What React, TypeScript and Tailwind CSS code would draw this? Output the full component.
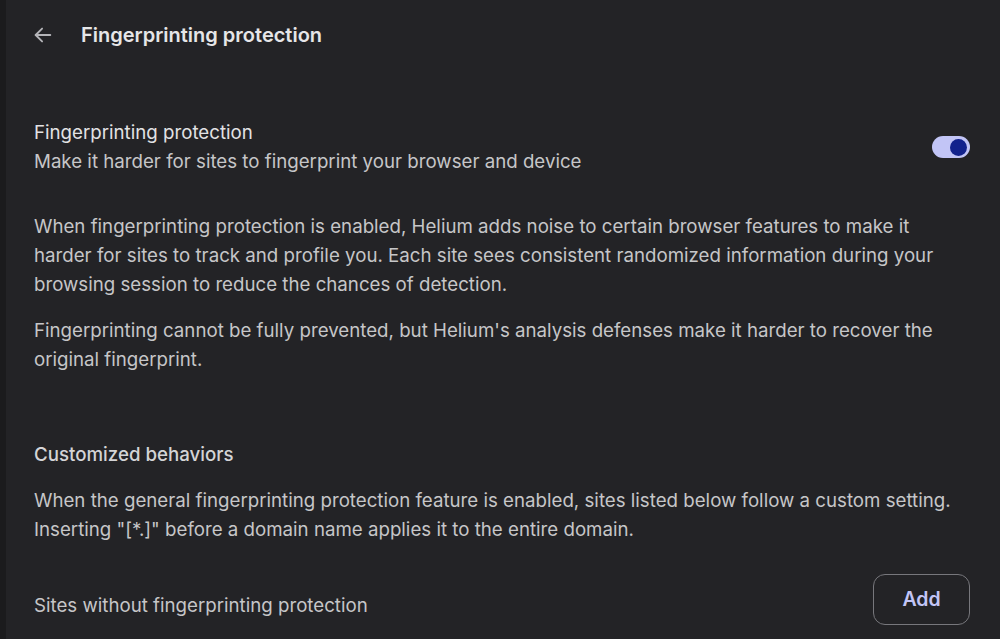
import React, { useState } from "react"

const App: React.FC = () => {
  const [enabled, setEnabled] = useState(true)

  return (
    <div
      className="flex h-[639px] w-[1000px] overflow-hidden bg-[#1b1b1d]"
      style={{ fontFamily: "Inter, 'Noto Sans', sans-serif" }}
    >
      <div className="ml-[6px] flex-1 bg-[#232326] pl-[28px] pr-[30px] text-[18.7px] leading-[29px] text-[#c6c6c8]">
        <div className="flex h-[70px] items-center gap-[27px]">
          <button type="button" className="-ml-[2px] text-[#b4b4b8]">
            <svg width="22" height="22" viewBox="0 0 24 24" fill="none" stroke="currentColor" strokeWidth="2" strokeLinecap="round" strokeLinejoin="round">
              <path d="M20 12H4" />
              <path d="M11 5l-7 7 7 7" />
            </svg>
          </button>
          <h1 className="text-[20px] font-semibold text-[#e6e6e8]">Fingerprinting protection</h1>
        </div>

        <div className="mt-[48px] flex items-center justify-between">
          <div>
            <div className="text-[#e2e2e4]">Fingerprinting protection</div>
            <div>Make it harder for sites to fingerprint your browser and device</div>
          </div>
          <button
            type="button"
            onClick={() => setEnabled(!enabled)}
            className="flex h-[22px] w-[38px] items-center rounded-full bg-[#c2c5f6] px-[3px]"
          >
            <span className={`h-[17px] w-[17px] rounded-full bg-[#12228c] ${enabled ? "ml-auto" : ""}`} />
          </button>
        </div>

        <div className="max-w-[926px]">
          <p className="mt-[36px]">
            When fingerprinting protection is enabled, Helium adds noise to certain browser features to make it
            harder for sites to track and profile you. Each site sees consistent randomized information during your
            browsing session to reduce the chances of detection.
          </p>
          <p className="mt-[17px]">
            Fingerprinting cannot be fully prevented, but Helium's analysis defenses make it harder to recover the
            original fingerprint.
          </p>

          <h2 className="mt-[66px] font-medium text-[#d4d4d6]">Customized behaviors</h2>
          <p className="mt-[17px]">
            When the general fingerprinting protection feature is enabled, sites listed below follow a custom setting.
            Inserting "[*.]" before a domain name applies it to the entire domain.
          </p>
        </div>

        <div className="mt-[30px] flex items-start justify-between">
          <div className="mt-[17px]">Sites without fingerprinting protection</div>
          <button
            type="button"
            className="h-[51px] w-[97px] rounded-[12px] border border-[#77777c] text-[19.5px] font-semibold text-[#c2c5f6]"
          >
            Add
          </button>
        </div>
      </div>
    </div>
  )
}

export default App
